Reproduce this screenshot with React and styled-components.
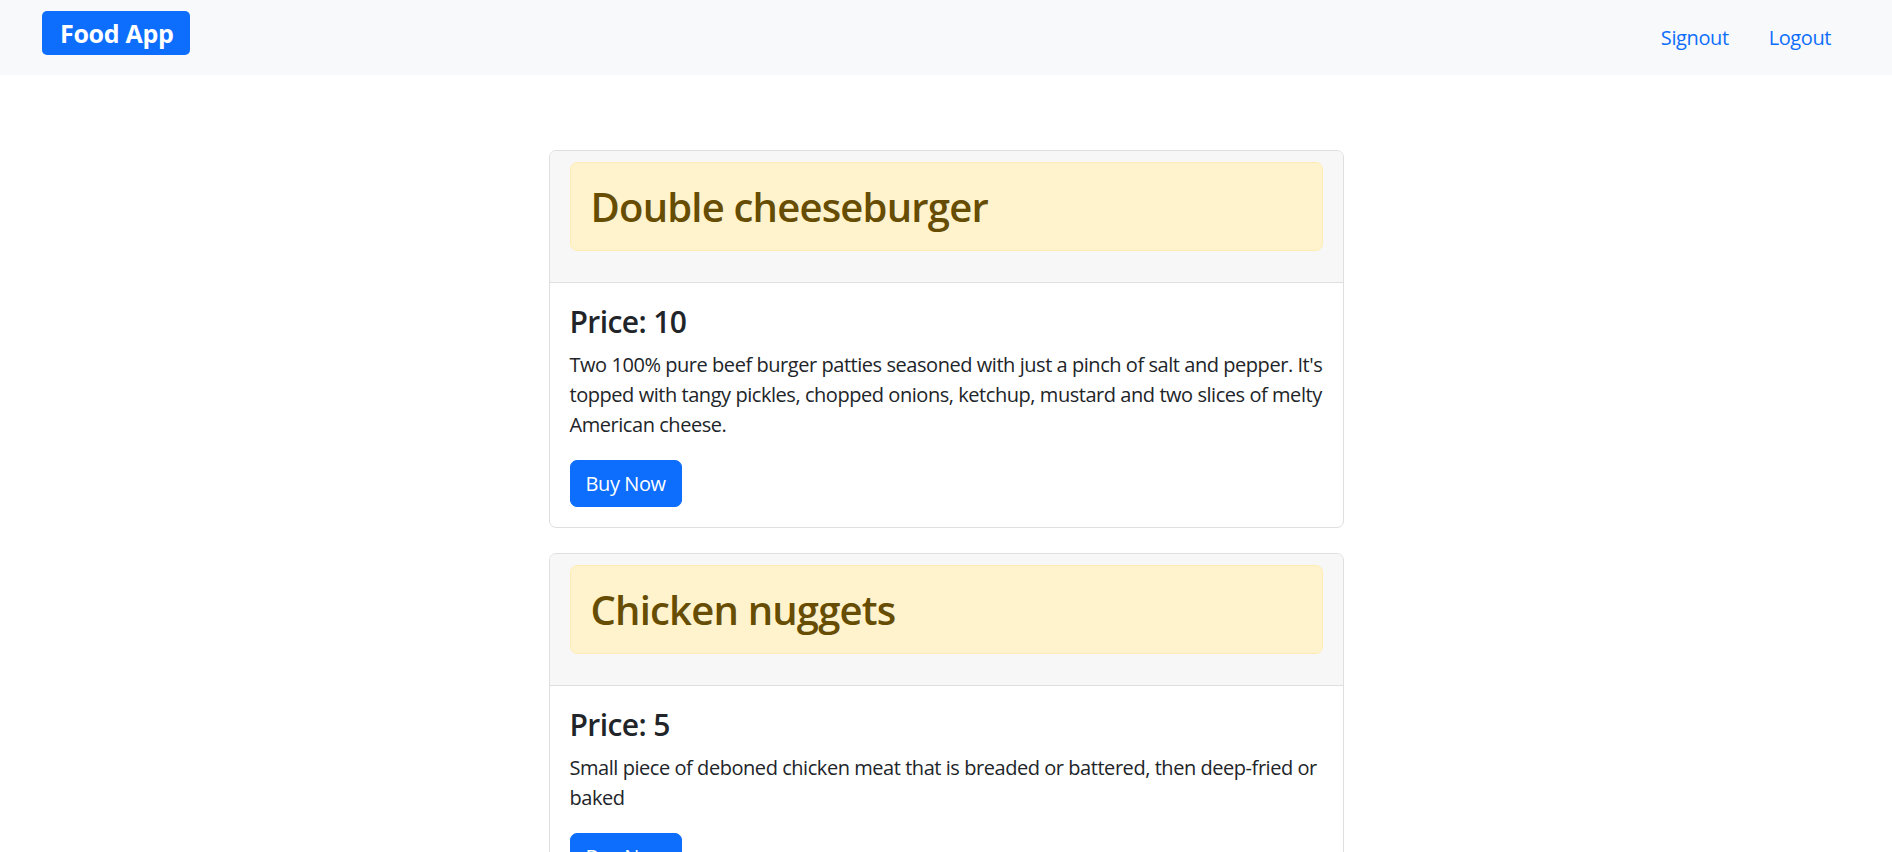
import React from "react";
import styled, { createGlobalStyle } from "styled-components";

const Global = createGlobalStyle`
  html, body { margin: 0; padding: 0; background: #fff; }
  body {
    font-family: "Segoe UI", "Open Sans", "Noto Sans", "Liberation Sans", sans-serif;
    color: #212529;
    font-size: 20px;
    line-height: 1.5;
  }
  * { box-sizing: border-box; }
`;

const Navbar = styled.nav`
  height: 75px;
  background: #f8f9fa;
  display: flex;
  justify-content: space-between;
  align-items: flex-start;
  padding: 11px 41px 0 42px;
`;

const Brand = styled.a`
  display: block;
  height: 44px;
  line-height: 44px;
  padding: 0 17px 0 18px;
  background: #0d6efd;
  color: #fff;
  font-size: 25px;
  font-weight: 700;
  border-radius: 5px;
  text-decoration: none;
  letter-spacing: -0.3px;
`;

const NavLinks = styled.div`
  display: flex;
  padding-top: 8px;
`;

const NavLink = styled.a`
  display: block;
  padding: 0 20px;
  font-size: 20px;
  line-height: 38px;
  color: #0d6efd;
  text-decoration: none;
  letter-spacing: -0.4px;
`;

const Main = styled.main`
  width: 795px;
  margin: 75px auto 0;
`;

const Card = styled.div`
  border: 1px solid #dfdfdf;
  border-radius: 7px;
  margin-bottom: 25px;
  overflow: hidden;
  background: #fff;
`;

const CardHeader = styled.div`
  background: #f7f7f7;
  border-bottom: 1px solid #dfdfdf;
  padding: 11px 20px 11px;
`;

const Alert = styled.div`
  background: #fff3cd;
  border: 1px solid #ffecb5;
  border-radius: 7px;
  padding: 20px;
  margin-bottom: 20px;
`;

const FoodName = styled.h2`
  margin: 0;
  font-size: 40px;
  line-height: 47px;
  font-weight: 600;
  color: #664d03;
  letter-spacing: -0.8px;
`;

const CardBody = styled.div`
  padding: 21px 20px 20px;
`;

const Price = styled.h4`
  margin: 0 0 10px;
  font-size: 30px;
  line-height: 36px;
  font-weight: 600;
  color: #212529;
  letter-spacing: -0.6px;
`;

const Description = styled.p`
  margin: 0 0 20px;
  font-size: 20px;
  line-height: 30px;
  color: #212529;
  letter-spacing: -0.45px;
`;

const BuyButton = styled.button`
  font-family: inherit;
  font-size: 20px;
  line-height: 30px;
  padding: 7.5px 15px;
  border: 1px solid #0d6efd;
  background: #0d6efd;
  color: #fff;
  border-radius: 7px;
  cursor: pointer;
  letter-spacing: -0.4px;
`;

const foods = [
  {
    name: "Double cheeseburger",
    price: 10,
    description:
      "Two 100% pure beef burger patties seasoned with just a pinch of salt and pepper. It's topped with tangy pickles, chopped onions, ketchup, mustard and two slices of melty American cheese.",
  },
  {
    name: "Chicken nuggets",
    price: 5,
    description:
      "Small piece of deboned chicken meat that is breaded or battered, then deep-fried or baked",
  },
];

export default function App() {
  return (
    <>
      <Global />
      <Navbar>
        <Brand href="#">Food App</Brand>
        <NavLinks>
          <NavLink href="#">Signout</NavLink>
          <NavLink href="#">Logout</NavLink>
        </NavLinks>
      </Navbar>
      <Main>
        {foods.map((f) => (
          <Card key={f.name}>
            <CardHeader>
              <Alert>
                <FoodName>{f.name}</FoodName>
              </Alert>
            </CardHeader>
            <CardBody>
              <Price>Price: {f.price}</Price>
              <Description>{f.description}</Description>
              <BuyButton>Buy Now</BuyButton>
            </CardBody>
          </Card>
        ))}
      </Main>
    </>
  );
}
